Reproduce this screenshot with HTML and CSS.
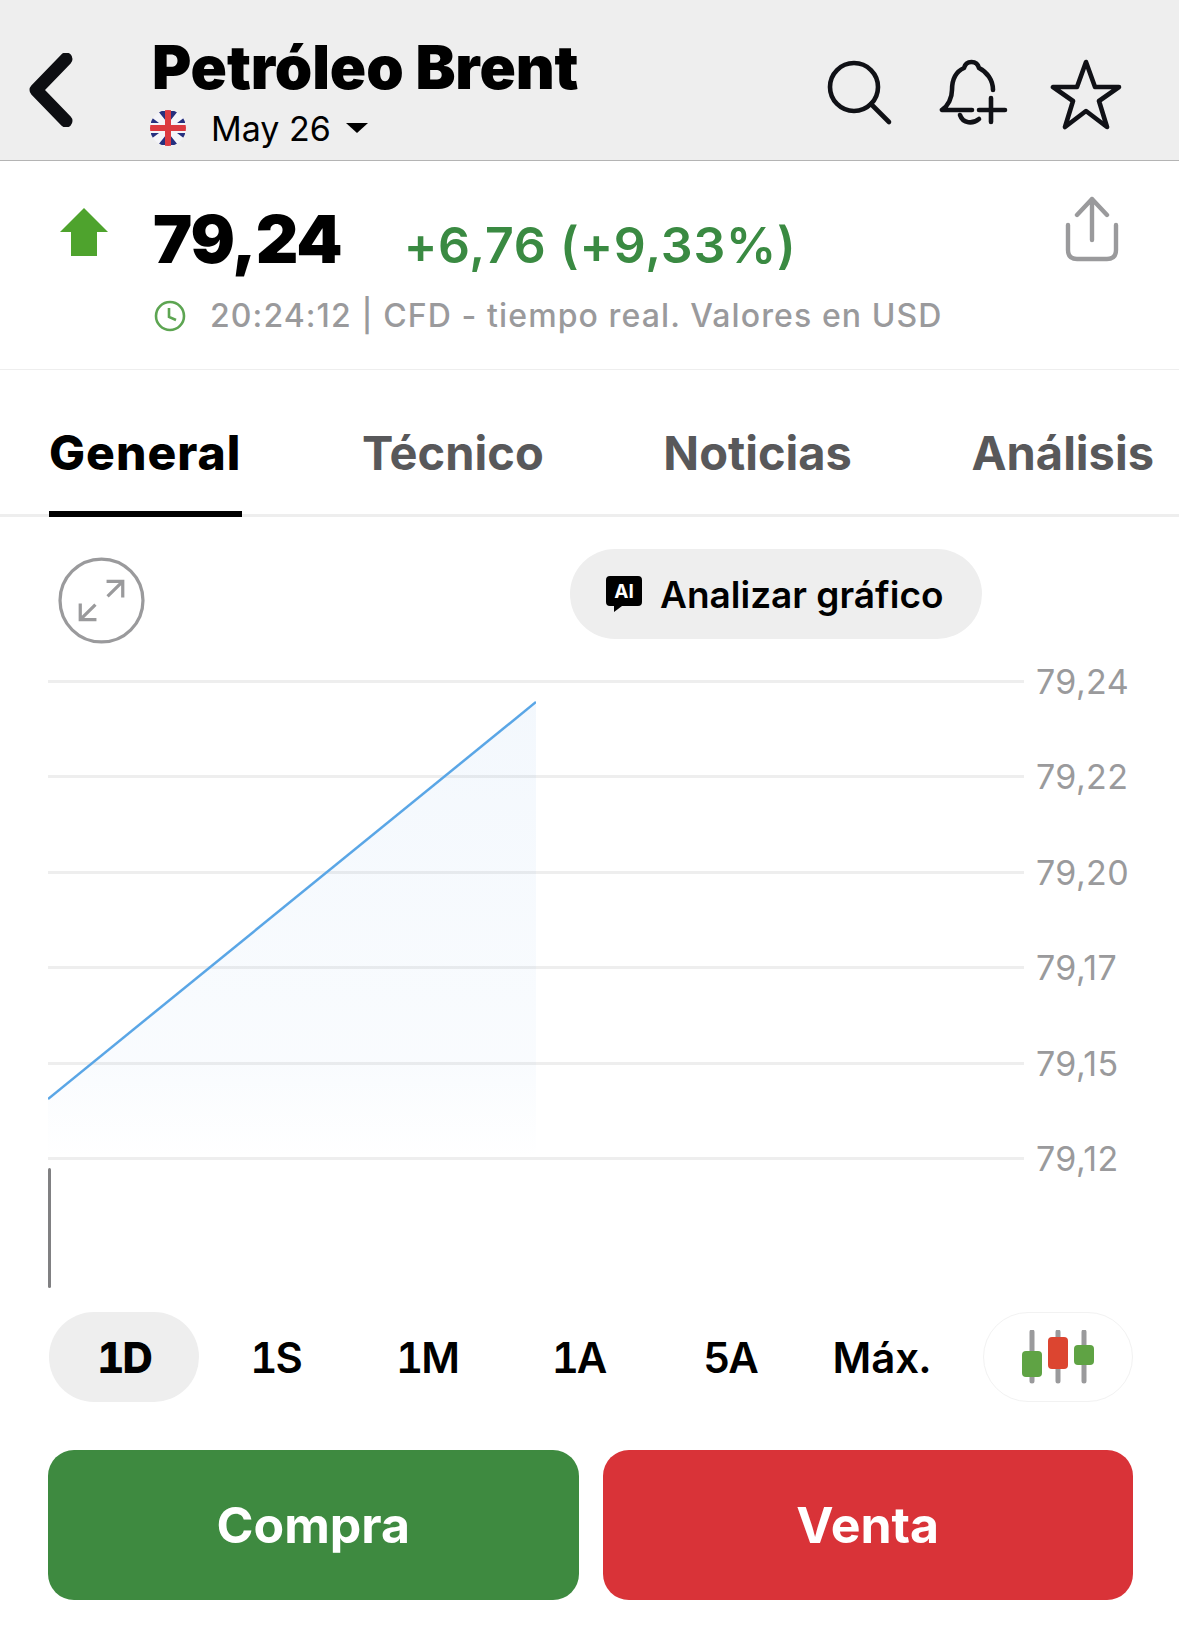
FILE: index.html
```html
<!DOCTYPE html>
<html lang="es">
<head>
    <meta charset="UTF-8">
    <meta name="viewport" content="width=device-width, initial-scale=1.0">
    <title>Petróleo Brent</title>
    <link rel="stylesheet" href="styles.css">
</head>
<body>
    <header class="cabecera">
        <svg class="volver" viewBox="0 0 44 74"><path d="M37 6 L7 37 L37 68"/></svg>
        <div class="titulo">
            <h1>Petróleo Brent</h1>
            <div class="contrato">
                <svg class="bandera" viewBox="0 0 36 36">
                    <defs><clipPath id="disco"><circle cx="18" cy="18" r="18"/></clipPath></defs>
                    <g clip-path="url(#disco)">
                        <rect width="36" height="36" fill="#f4f4f8"/>
                        <path d="M8 1 L16 1 V11 Z M28 1 L20 1 V11 Z M8 35 L16 35 V25 Z M28 35 L20 35 V25 Z M1 7 L9 13 H1 Z M35 7 L27 13 H35 Z M1 29 L9 23 H1 Z M35 29 L27 23 H35 Z" fill="#26307f"/>
                        <rect x="15" width="6" height="36" fill="#dc3a40"/>
                        <rect y="15" width="36" height="6" fill="#dc3a40"/>
                    </g>
                </svg>
                <span>May 26</span>
                <i class="caret"></i>
            </div>
        </div>
        <div class="acciones">
            <svg class="icono buscar" width="66" height="66" viewBox="0 0 66 66"><circle cx="27" cy="27" r="24"/><path d="M44 44 L62 62"/></svg>
            <svg class="icono campana" width="70" height="70" viewBox="0 0 70 70"><path d="M54 34 C54 24 48 16 40 12 C38 4 27 4 25 12 C16 16 13 25 13 34 C13 42 9 50 3 54 H33"/><path d="M21 59 C24 68 34 68 40 63"/><path d="M52 42 V66 M40 54 H66"/></svg>
            <svg class="icono estrella" width="72" height="72" viewBox="0 0 72 72"><path d="M36 4 L45 29 L69 29 L49 43 L57 69 L36 53 L15 69 L23 43 L3 29 L27 29 Z"/></svg>
        </div>
    </header>

    <section class="resumen">
        <svg class="flecha" viewBox="0 0 48 48"><path d="M24 0 L48 24 H37 V48 H11 V24 H0 Z"/></svg>
        <div class="datos">
            <div class="precios">
                <span class="precio">79,24</span>
                <span class="cambio">+6,76 (+9,33%)</span>
            </div>
            <div class="hora">
                <svg class="reloj" viewBox="0 0 32 32"><circle cx="16" cy="16" r="14"/><path d="M15 8 V17 L22 20"/></svg>
                <span>20:24:12 | CFD - tiempo real. Valores en USD</span>
            </div>
        </div>
        <svg class="compartir" viewBox="0 0 54 66"><path d="M27 44 V3 M12 19 L27 3 L42 19"/><path d="M3 29 V54 Q3 63 12 63 H42 Q51 63 51 54 V29"/></svg>
    </section>

    <nav class="pestanas">
        <a class="activa">General</a>
        <a>Técnico</a>
        <a>Noticias</a>
        <a>Análisis</a>
    </nav>

    <div class="herramientas">
        <svg class="expandir" viewBox="0 0 86 86"><circle cx="43" cy="43" r="41"/><path d="M48 24 H64 V40 M64 24 L49 39 M22 46 V62 H38 M22 62 L37 47"/></svg>
        <button class="analizar">
            <svg class="ia" viewBox="0 0 36 36">
                <path d="M4 0 H32 Q36 0 36 4 V26 Q36 30 32 30 H16 L8 36 V30 H4 Q0 30 0 26 V4 Q0 0 4 0 Z"/>
                <text x="18" y="22" text-anchor="middle">AI</text>
            </svg>
            Analizar gráfico
        </button>
    </div>

    <div class="grafico">
        <div class="fila"><div class="linea"></div><span>79,24</span></div>
        <div class="fila"><div class="linea"></div><span>79,22</span></div>
        <div class="fila"><div class="linea"></div><span>79,20</span></div>
        <div class="fila"><div class="linea"></div><span>79,17</span></div>
        <div class="fila"><div class="linea"></div><span>79,15</span></div>
        <div class="fila"><div class="linea"></div><span>79,12</span></div>
        <svg class="curva" viewBox="0 0 488 480">
            <defs>
                <linearGradient id="relleno" x1="0" y1="0" x2="0" y2="1">
                    <stop offset="0" stop-color="#3d8be0" stop-opacity="0.06"/>
                    <stop offset="0.8" stop-color="#3d8be0" stop-opacity="0.03"/>
                    <stop offset="1" stop-color="#3d8be0" stop-opacity="0"/>
                </linearGradient>
            </defs>
            <path d="M0 419 L488 22 V480 H0 Z" fill="url(#relleno)"/>
            <path d="M0 419 L488 22" fill="none" stroke="#5aa6e6" stroke-width="2.5"/>
        </svg>
    </div>
    <div class="volumen"></div>

    <div class="rangos">
        <a class="activo">1D</a>
        <a>1S</a>
        <a>1M</a>
        <a>1A</a>
        <a>5A</a>
        <a class="maximo">Máx.</a>
        <a class="velas">
            <svg width="76" height="54" viewBox="0 0 76 54">
                <path d="M10 2 V51 M36 2 V51 M62 2 V51" stroke="#9a9a9c" stroke-width="5" stroke-linecap="round"/>
                <rect x="0" y="21" width="20" height="26" rx="4" fill="#5fa344"/>
                <rect x="26" y="7" width="20" height="32" rx="4" fill="#dc4530"/>
                <rect x="52" y="15" width="20" height="20" rx="4" fill="#5fa344"/>
            </svg>
        </a>
    </div>

    <div class="operar">
        <button class="compra">Compra</button>
        <button class="venta">Venta</button>
    </div>
</body>
</html>
```

FILE: styles.css
```css
* {
    box-sizing: border-box;
}
body {
    margin: 0;
    width: 1179px;
    height: 1634px;
    overflow: hidden;
    background: #fff;
    color: #000;
    font-family: Inter, "Noto Sans", sans-serif;
}

/* cabecera */
.cabecera {
    display: flex;
    height: 161px;
    padding-left: 29px;
    background: #eeeeee;
    border-bottom: 1px solid #b4b4b4;
}
.volver {
    width: 44px;
    height: 74px;
    margin-top: 53px;
    fill: none;
    stroke: #0d0e12;
    stroke-width: 13;
    stroke-linecap: round;
    stroke-linejoin: round;
}
.titulo {
    margin-left: 79px;
    padding-top: 33px;
}
h1 {
    margin: 0;
    font-size: 60px;
    line-height: 68px;
    font-weight: 900;
    letter-spacing: -0.1px;
    white-space: nowrap;
}
.contrato {
    display: flex;
    align-items: center;
    height: 36px;
    margin-top: 9px;
    font-size: 34px;
}
.bandera {
    width: 36px;
    height: 36px;
    margin-left: -2px;
}
.contrato span {
    margin-left: 25px;
}
.caret {
    width: 0;
    height: 0;
    margin-left: 15px;
    border-left: 11px solid transparent;
    border-right: 11px solid transparent;
    border-top: 10px solid #000;
}
.acciones {
    display: flex;
    align-items: flex-start;
    gap: 46px;
    margin-left: auto;
    margin-right: 57px;
    padding-top: 58px;
}
.icono {
    fill: none;
    stroke: #101116;
    stroke-width: 4.6;
    stroke-linecap: round;
    stroke-linejoin: round;
}
.buscar {
    margin-top: 2px;
}
.campana {
    margin-top: -2px;
}
.estrella {
    margin-left: -5px;
}

/* precio */
.resumen {
    display: flex;
    height: 209px;
    padding-left: 60px;
    border-bottom: 1px solid #eeeeee;
}
.flecha {
    width: 48px;
    height: 48px;
    margin-top: 47px;
    fill: #4ea32d;
}
.datos {
    margin-left: 45px;
    padding-top: 38px;
}
.precios {
    display: flex;
    align-items: baseline;
    height: 80px;
}
.precio {
    font-size: 66px;
    line-height: 80px;
    font-weight: 900;
    letter-spacing: -1px;
}
.cambio {
    margin-left: 62px;
    font-size: 50px;
    font-weight: 600;
    letter-spacing: 0.8px;
    color: #3a8a42;
}
.hora {
    display: flex;
    align-items: center;
    gap: 24px;
    margin-top: 17px;
    color: #9a9a9c;
    font-size: 32px;
    font-weight: 500;
    letter-spacing: 1.1px;
    white-space: nowrap;
}
.reloj {
    width: 32px;
    height: 32px;
    margin-left: 1px;
    fill: none;
    stroke: #5da552;
    stroke-width: 2.6;
}
.compartir {
    width: 54px;
    height: 66px;
    margin-left: auto;
    margin-right: 60px;
    margin-top: 35px;
    fill: none;
    stroke: #9a9a9c;
    stroke-width: 4.4;
    stroke-linecap: round;
    stroke-linejoin: round;
}

/* pestañas */
.pestanas {
    display: flex;
    justify-content: space-between;
    height: 147px;
    padding: 50px 25px 0 49px;
    border-bottom: 3px solid #eeeeee;
    font-size: 47px;
    font-weight: 700;
    color: #58585a;
}
.pestanas a {
    height: 97px;
    line-height: 66px;
}
.pestanas .activa {
    color: #000;
    font-size: 48px;
    font-weight: 800;
    letter-spacing: 1px;
    border-bottom: 6px solid #000;
    padding-right: 1px;
}

/* herramientas */
.herramientas {
    display: flex;
    align-items: flex-start;
    height: 163px;
    padding-left: 58px;
    padding-top: 32px;
}
.expandir {
    width: 87px;
    height: 87px;
    margin-top: 8px;
    fill: none;
    stroke: #9a9a9c;
    stroke-width: 3.2;
}
.analizar {
    display: flex;
    align-items: center;
    gap: 18px;
    width: 412px;
    height: 90px;
    margin-left: 425px;
    padding: 0 0 0 36px;
    border: 0;
    border-radius: 45px;
    background: #eeeeee;
    color: #000;
    font-family: inherit;
    font-size: 37px;
    font-weight: 600;
}
.ia {
    width: 36px;
    height: 36px;
    fill: #000;
}
.ia text {
    fill: #fff;
    font-size: 19px;
    font-weight: 700;
    font-family: Inter, sans-serif;
}

/* gráfico */
.grafico {
    position: relative;
    height: 488px;
    padding-left: 48px;
}
.fila {
    display: flex;
    height: 95.4px;
    color: #9a9a9c;
    font-size: 34px;
    letter-spacing: 0.4px;
}
.linea {
    width: 976px;
    height: 3px;
    background: #eeeeee;
}
.fila span {
    margin-left: 12px;
    line-height: 3px;
}
.curva {
    position: absolute;
    left: 48px;
    top: 0;
    width: 488px;
    height: 480px;
}
.volumen {
    width: 3px;
    height: 120px;
    margin-left: 48px;
    background: #808082;
    border-radius: 2px;
}

/* rangos */
.rangos {
    display: flex;
    align-items: center;
    height: 90px;
    margin: 24px 46px 0 49px;
    font-size: 42px;
    font-weight: 600;
    font-variant-numeric: tabular-nums;
    letter-spacing: -2px;
}
.rangos a {
    display: flex;
    align-items: center;
    justify-content: center;
    width: 150px;
    height: 90px;
    margin-right: 1.5px;
    border-radius: 45px;
}
.rangos .activo {
    background: #eeeeee;
    font-weight: 800;
}
.rangos .maximo {
    letter-spacing: 0;
}
.rangos .velas {
    margin-left: auto;
    margin-right: 0;
    border: 1px solid #f2f2f2;
}
.velas svg {
    margin-left: 4px;
}

/* compra y venta */
.operar {
    display: flex;
    gap: 24px;
    margin: 48px 46px 0 48px;
}
.operar button {
    flex: 1;
    height: 150px;
    border: 0;
    border-radius: 26px;
    color: #fff;
    font-family: inherit;
    font-size: 50px;
    font-weight: 700;
}
.compra {
    background: #3e8a40;
}
.venta {
    background: #d93338;
}
```
